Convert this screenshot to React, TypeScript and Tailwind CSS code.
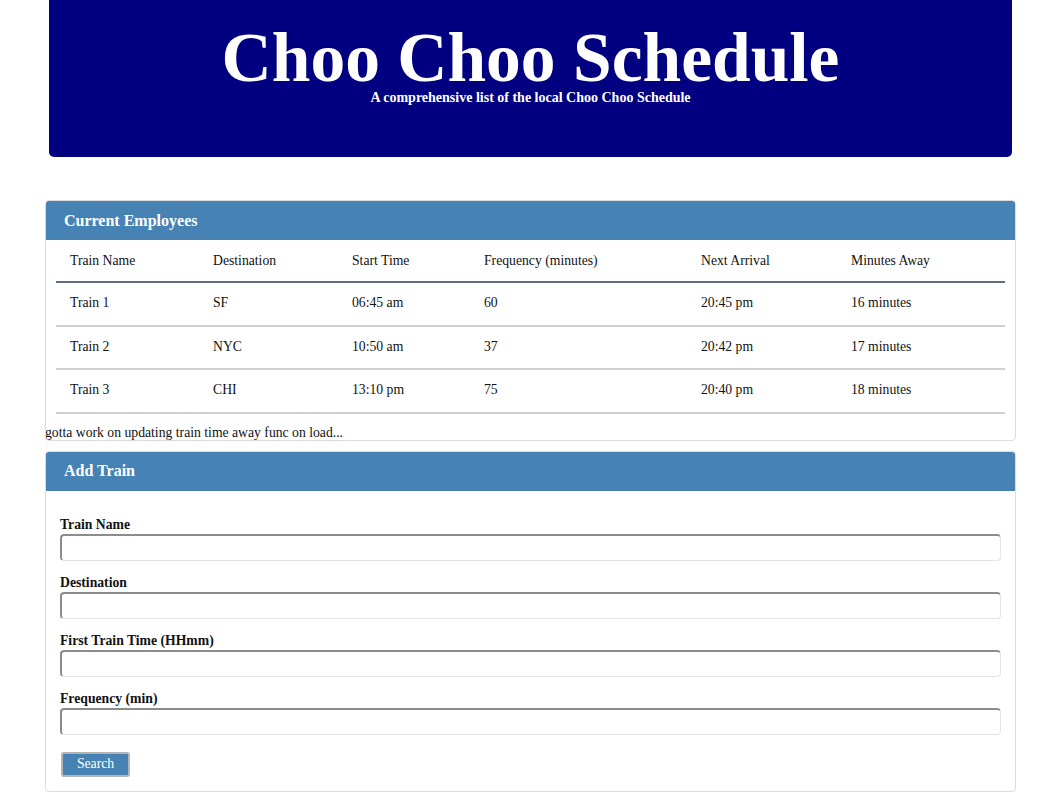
const trains = [
  { name: "Train 1", dest: "SF", start: "06:45 am", freq: "60", next: "20:45 pm", away: "16 minutes" },
  { name: "Train 2", dest: "NYC", start: "10:50 am", freq: "37", next: "20:42 pm", away: "17 minutes" },
  { name: "Train 3", dest: "CHI", start: "13:10 pm", freq: "75", next: "20:40 pm", away: "18 minutes" },
];

const cols = ["w-[143px]", "w-[139px]", "w-[132px]", "w-[217px]", "w-[150px]", "w-[168px]"];
const headers = ["Train Name", "Destination", "Start Time", "Frequency (minutes)", "Next Arrival", "Minutes Away"];

const fields = ["Train Name", "Destination", "First Train Time (HHmm)", "Frequency (min)"];

export default function App() {
  return (
    <div className="min-h-[800px] bg-white text-[#111] font-['Liberation_Serif','Times_New_Roman',serif]">
      <div className="w-[971px] ml-[45px]">
        {/* Jumbotron */}
        <div className="mx-[4px] h-[157px] rounded-b-[5px] bg-[#000080] text-white text-center pt-[27px]">
          <h1 className="text-[69.5px] font-bold leading-[62px]">Choo Choo Schedule</h1>
          <p className="text-[14px] font-bold leading-[18px]">
            A comprehensive list of the local Choo Choo Schedule
          </p>
        </div>

        {/* Current trains */}
        <div className="mt-[43px] border border-[#dcdcdc] rounded-[4px] overflow-hidden">
          <div className="h-[39px] bg-[#4682b4] text-white px-[18px] flex items-center">
            <h3 className="text-[16px] font-bold">Current Employees</h3>
          </div>
          <div className="px-[10px]">
            <table className="w-full text-[13.7px] border-collapse">
              <thead>
                <tr className="h-[42px] border-b-2 border-[#5d6e80]">
                  {headers.map((h, i) => (
                    <th key={h} className={`${cols[i]} text-left font-normal pl-[14px] pt-[1px]`}>
                      {h}
                    </th>
                  ))}
                </tr>
              </thead>
              <tbody>
                {trains.map((t) => (
                  <tr key={t.name} className="h-[43.5px] border-b-2 border-[#cfcfcf]">
                    {[t.name, t.dest, t.start, t.freq, t.next, t.away].map((v, i) => (
                      <td key={i} className="pl-[14px]">
                        {v}
                      </td>
                    ))}
                  </tr>
                ))}
              </tbody>
            </table>
          </div>
          <p className="text-[13.7px] -ml-px h-[26px] pt-[10px] leading-[17px]">
            gotta work on updating train time away func on load...
          </p>
        </div>

        {/* Add train */}
        <div className="mt-[10px] border border-[#dcdcdc] rounded-[4px] overflow-hidden">
          <div className="h-[39px] bg-[#4682b4] text-white px-[18px] flex items-center">
            <h3 className="text-[16px] font-bold">Add Train</h3>
          </div>
          <form className="px-[14px] pt-[25px] pb-[14px]" onSubmit={(e) => e.preventDefault()}>
            {fields.map((f) => (
              <div key={f} className="mb-[4px]">
                <label className="block text-[13.7px] font-bold leading-[18px]">{f}</label>
                <input
                  type="text"
                  className="block w-[941px] h-[27px] rounded-[4px] border border-[#e4e4e4] border-t-2 border-l-2 border-t-[#8c8c8c] border-l-[#8c8c8c] bg-white"
                />
                <div className="h-[9px]" />
              </div>
            ))}
            <button
              type="submit"
              className="mt-[4px] ml-px h-[25px] w-[69px] rounded-[3px] border-2 border-[#b4b4b4] bg-[#4682b4] text-white text-[13.7px] leading-[20px]"
            >
              Search
            </button>
          </form>
        </div>
      </div>
    </div>
  );
}
